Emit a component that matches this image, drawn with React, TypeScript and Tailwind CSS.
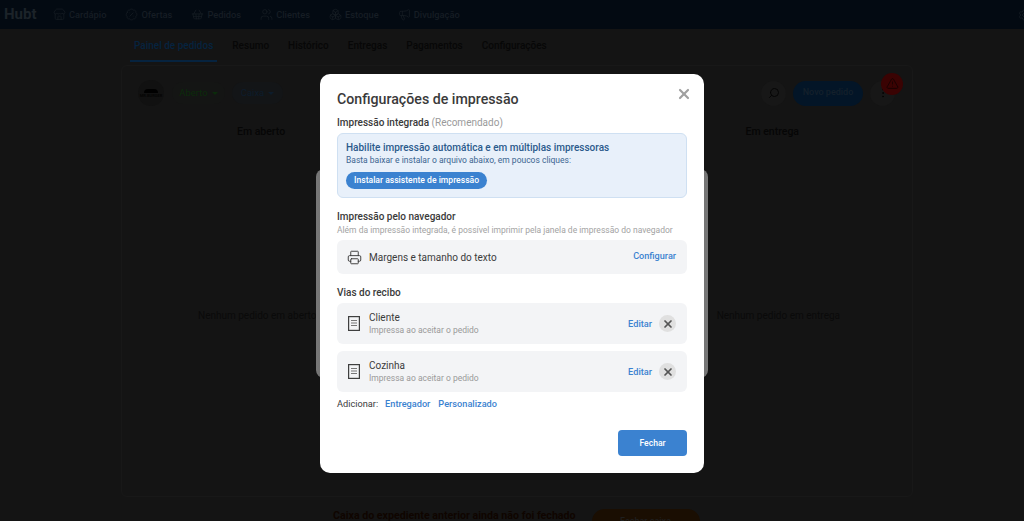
import React from 'react';
import {
  Store,
  BadgePercent,
  ShoppingBasket,
  Users,
  Boxes,
  Megaphone,
  Search,
  MoreVertical,
  TriangleAlert,
  Settings,
  X,
  Printer,
} from 'lucide-react';

const navItems = [
  { label: 'Cardápio', icon: Store },
  { label: 'Ofertas', icon: BadgePercent },
  { label: 'Pedidos', icon: ShoppingBasket },
  { label: 'Clientes', icon: Users },
  { label: 'Estoque', icon: Boxes },
  { label: 'Divulgação', icon: Megaphone },
];

const tabs = ['Resumo', 'Histórico', 'Entregas', 'Pagamentos', 'Configurações'];

const DocIcon = () => (
  <svg width="12" height="15" viewBox="0 0 12 15" fill="none" className="shrink-0">
    <rect x="0.6" y="0.6" width="10.8" height="13.8" stroke="#3f3f3f" strokeWidth="1.2" />
    <path d="M3 4.5h6M3 7h6M3 9.5h6" stroke="#777777" strokeWidth="1" />
  </svg>
);

const ReceiptRow = ({ title }: { title: string }) => (
  <div className="flex h-[41px] items-center rounded-md bg-[#f3f4f6] pl-[11px] pr-[11px]">
    <DocIcon />
    <div className="ml-[9px] flex-1 pt-[1px]">
      <div className="text-[10px] leading-[13px] text-[#3b3b3b]">{title}</div>
      <div className="text-[8.5px] leading-[13px] text-[#9a9a9a]">Impressa ao aceitar o pedido</div>
    </div>
    <span className="text-[9.2px] font-medium text-[#3b82d0]">Editar</span>
    <span className="ml-[7px] flex h-[17px] w-[17px] items-center justify-center rounded-full bg-[#e0e0e0]">
      <X className="h-[12px] w-[12px] text-[#555555]" strokeWidth={3.4} />
    </span>
  </div>
);

export default function App() {
  return (
    <div className="relative h-[521px] w-[1024px] overflow-hidden bg-[#141414] font-['Roboto',sans-serif]">
      <header className="flex h-[29px] items-center bg-[#030a12] pl-[4px]">
        <span className="w-[34px] text-[15px] font-bold text-[#1c2329]">Hubt</span>
        <nav className="ml-[15px] flex flex-1 items-center">
          {navItems.map((item) => (
            <div key={item.label} className="mr-[19px] flex items-center gap-[3px] text-[#161d24]">
              <item.icon className="h-[13px] w-[13px]" strokeWidth={1.4} />
              <span className="text-[9.3px] font-medium">{item.label}</span>
            </div>
          ))}
        </nav>
        <Settings className="-mr-[6px] h-[12px] w-[12px] shrink-0 text-[#141b22]" />
      </header>

      <div className="flex h-[33px] items-center pl-[130px] text-[10px] font-medium text-[#070707]">
        <div className="flex h-full items-center border-b-[2px] border-[#06233f] px-[4px] pt-[2px] text-[#06233f]">
          Painel de pedidos
        </div>
        {tabs.map((t) => (
          <span key={t} className="ml-[15px] pr-[4px]">
            {t}
          </span>
        ))}
      </div>

      <main className="ml-[121px] mr-[111px] mt-[3px] h-[432px] rounded-md border border-[#181818]">
        <div className="flex h-[54px] items-center pl-[16px] pr-[17px]">
          <div className="flex h-[26px] w-[26px] flex-col items-center justify-center rounded-full bg-[#111111]">
            <div className="h-[4px] w-[14px] rounded-t-full bg-black" />
            <div className="mt-[1px] whitespace-nowrap text-[4px] font-bold leading-none text-[#050505]">MR.BURGER</div>
          </div>
          <div className="ml-[8px] flex h-[22px] w-[53px] items-center justify-center gap-[4px] rounded-full bg-[#141514] text-[9.5px] text-[#0b2b0b]">
            Aberto
            <span className="h-0 w-0 border-x-[3px] border-t-[3px] border-x-transparent border-t-[#0b2b0b]" />
          </div>
          <div className="ml-[7px] flex h-[22px] w-[51px] items-center justify-center gap-[4px] rounded-full bg-[#131517] text-[9.5px] text-[#0d1c2b]">
            Caixa
            <span className="h-0 w-0 border-x-[3px] border-t-[3px] border-x-transparent border-t-[#0d1c2b]" />
          </div>
          <div className="flex-1" />
          <div className="flex h-[25px] w-[25px] items-center justify-center rounded-full bg-[#171717]">
            <Search className="h-[12px] w-[12px] -scale-x-100 text-[#050505]" />
          </div>
          <div className="ml-[7px] flex h-[25px] w-[70px] items-center justify-center rounded-full bg-[#031527] text-[9px] font-medium text-[#14202b]">
            Novo pedido
          </div>
          <div className="relative ml-[7px] flex h-[25px] w-[25px] items-center justify-center rounded-full bg-[#171717]">
            <MoreVertical className="h-[12px] w-[12px] text-[#050505]" />
            <span className="absolute -top-[8px] left-[11px] flex h-[22px] w-[22px] items-center justify-center rounded-full bg-[#3a0303]">
              <TriangleAlert className="h-[13px] w-[13px] text-[#160202]" strokeWidth={1.6} />
            </span>
          </div>
        </div>
        <div className="flex justify-between pl-[115px] pr-[113px] pt-[5px] text-[10.5px] font-medium leading-[14px] text-[#060606]">
          <span>Em aberto</span>
          <span>Em entrega</span>
        </div>
        <div className="flex justify-between pl-[76px] pr-[72px] pt-[170px] text-[10px] leading-[14px] text-[#0a0a0a]">
          <span>Nenhum pedido em aberto</span>
          <span>Nenhum pedido em entrega</span>
        </div>
      </main>

      <div className="mt-[12px] flex items-start pl-[333px]">
        <span className="text-[10.65px] font-bold leading-[14px] text-[#0f0500]">Caixa do expediente anterior ainda não foi fechado</span>
        <span className="ml-[16px] flex h-[25px] w-[108px] justify-center rounded-full bg-[#1a0e02] pt-[6px] text-[9px] font-medium text-[#1f1f1f]">
          Fechar caixa
        </span>
      </div>

      {/* modal que ficou por baixo */}
      <div className="absolute left-[316px] top-[169px] h-[209px] w-[392px] rounded-lg bg-gradient-to-r from-[#777777] via-[#1c1c1c] to-[#777777]" />

      <div className="absolute inset-0 flex items-start justify-center pt-[74px]">
        <div className="relative h-[399px] w-[384px] rounded-[10px] bg-white px-[17px] pt-[15px]">
          <button className="absolute right-[12px] top-[12px] text-[#a0a0a0]">
            <X className="h-[16px] w-[16px]" strokeWidth={3.2} />
          </button>
          <h2 className="text-[14.2px] font-medium leading-[20px] text-[#3a3a3a]">Configurações de impressão</h2>
          <p className="mt-[7px] text-[10px] leading-[14px] text-[#9a9a9a]">
            <span className="font-medium text-[#3a3a3a]">Impressão integrada</span> (Recomendado)
          </p>
          <div className="mt-[3px] h-[65px] rounded-md border border-[#cfe0f2] bg-[#e8f0fa] pl-[8px] pt-[7px]">
            <div className="text-[10px] font-medium leading-[13px] text-[#2b5a8c]">
              Habilite impressão automática e em múltiplas impressoras
            </div>
            <div className="mt-[1px] text-[8.5px] leading-[11px] text-[#3c6591]">
              Basta baixar e instalar o arquivo abaixo, em poucos cliques:
            </div>
            <button className="mt-[6px] block h-[17px] rounded-full bg-[#3b82d0] px-[8px] text-[8.6px] font-medium leading-[17px] text-white">
              Instalar assistente de impressão
            </button>
          </div>

          <h3 className="mt-[12px] text-[10px] font-medium leading-[14px] text-[#3a3a3a]">Impressão pelo navegador</h3>
          <p className="text-[8.5px] leading-[12px] text-[#a3a3a3]">
            Além da impressão integrada, é possível imprimir pela janela de impressão do navegador
          </p>
          <div className="mt-[4px] flex h-[34px] items-center rounded-md bg-[#f3f4f6] pl-[10px] pr-[11px]">
            <Printer className="h-[15px] w-[15px] text-[#3a3a3a]" strokeWidth={1.5} />
            <span className="ml-[7px] flex-1 text-[10px] text-[#3b3b3b]">Margens e tamanho do texto</span>
            <span className="text-[9.1px] font-medium text-[#3b82d0]">Configurar</span>
          </div>

          <h3 className="mt-[12px] text-[10px] font-medium leading-[14px] text-[#3a3a3a]">Vias do recibo</h3>
          <div className="mt-[3px] flex flex-col gap-[7px]">
            <ReceiptRow title="Cliente" />
            <ReceiptRow title="Cozinha" />
          </div>

          <div className="mt-[5px] flex items-center text-[9.2px] leading-[13px]">
            <span className="text-[#3a3a3a]">Adicionar:</span>
            <span className="ml-[7px] font-medium text-[#3b82d0]">Entregador</span>
            <span className="ml-[8px] font-medium text-[#3b82d0]">Personalizado</span>
          </div>

          <div className="mt-[20px] flex justify-end">
            <button className="h-[26px] w-[69px] rounded-[4px] bg-[#3b82d0] text-[8.6px] font-medium text-white">Fechar</button>
          </div>
        </div>
      </div>
    </div>
  );
}
